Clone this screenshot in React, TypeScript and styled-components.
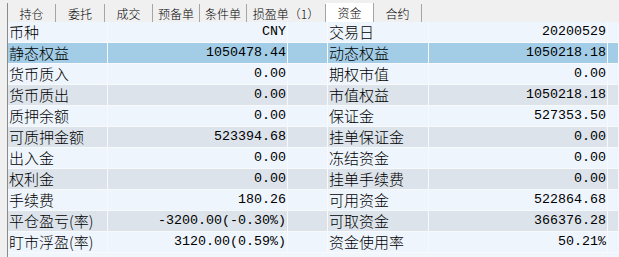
import React from "react";
import styled, { createGlobalStyle } from "styled-components";

const Global = createGlobalStyle`
  html, body {
    margin: 0;
    padding: 0;
    background: #f0f0f0;
    overflow: hidden;
  }
  body {
    width: 619px;
    height: 257px;
  }
`;

const tabs = [
  { name: "持仓", w: 48 },
  { name: "委托", w: 49 },
  { name: "成交", w: 48 },
  { name: "预备单", w: 47 },
  { name: "条件单", w: 47 },
  { name: "损盈单（1）", w: 79 },
  { name: "资金", w: 48, active: true },
  { name: "合约", w: 48 },
];

const rows = [
  ["币种", "CNY", "交易日", "20200529"],
  ["静态权益", "1050478.44", "动态权益", "1050218.18"],
  ["货币质入", "0.00", "期权市值", "0.00"],
  ["货币质出", "0.00", "市值权益", "1050218.18"],
  ["质押余额", "0.00", "保证金", "527353.50"],
  ["可质押金额", "523394.68", "挂单保证金", "0.00"],
  ["出入金", "0.00", "冻结资金", "0.00"],
  ["权利金", "0.00", "挂单手续费", "0.00"],
  ["手续费", "180.26", "可用资金", "522864.68"],
  ["平仓盈亏(率)", "-3200.00(-0.30%)", "可取资金", "366376.28"],
  ["盯市浮盈(率)", "3120.00(0.59%)", "资金使用率", "50.21%"],
];

const SELECTED = 1;

const Page = styled.div`
  padding: 3px 0 0 7px;
`;

const Panel = styled.div`
  border-left: 1px solid #8c8c8c;
  height: 254px;
  display: flex;
  flex-direction: column;
`;

const TabBar = styled.div`
  display: flex;
  height: 19px;
  align-items: flex-end;
`;

const Tab = styled.div<{ $w: number; $active?: boolean }>`
  width: ${(p) => p.$w}px;
  box-sizing: border-box;
  height: ${(p) => (p.$active ? 19 : 18)}px;
  border-right: 1px solid #a5a5a5;
  background: ${(p) => (p.$active ? "#ffffff" : "#f0f0f0")};
  font-family: "Noto Sans CJK SC", sans-serif;
  font-weight: 300;
  font-size: 12px;
  line-height: 19px;
  color: #000;
  text-align: center;
  white-space: nowrap;
`;

const Table = styled.div`
  flex: 1;
  background: #f0f6fc;
`;

const Row = styled.div<{ $kind: "light" | "dark" | "sel" }>`
  display: grid;
  grid-template-columns: 100px 180px 40px 101px 179px 1fr;
  height: 21px;
  box-sizing: border-box;
  border-bottom: 1px solid #f7f9fb;
  background: ${(p) =>
    p.$kind === "sel" ? "#a3cde6" : p.$kind === "dark" ? "#dce3ea" : "#eff5fc"};
`;

const Cell = styled.div<{ $num?: boolean }>`
  box-sizing: border-box;
  border-right: 1px solid #f7f9fb;
  height: 20px;
  line-height: 20px;
  color: #000;
  white-space: nowrap;
  overflow: hidden;
  padding: ${(p) => (p.$num ? "0 1px 0 0" : "0 0 0 1px")};
  text-align: ${(p) => (p.$num ? "right" : "left")};
  font-family: ${(p) =>
    p.$num
      ? '"Liberation Mono", monospace'
      : '"Noto Sans CJK SC", sans-serif'};
  font-weight: ${(p) => (p.$num ? 400 : 300)};
  font-size: ${(p) => (p.$num ? "13.33px" : "15px")};
`;

export default function App() {
  return (
    <Page>
      <Global />
      <Panel>
        <TabBar>
          {tabs.map((t) => (
            <Tab key={t.name} $w={t.w} $active={t.active}>
              {t.name}
            </Tab>
          ))}
        </TabBar>
        <Table>
          {rows.map((r, i) => (
            <Row
              key={r[0]}
              $kind={i === SELECTED ? "sel" : i % 2 === 1 ? "dark" : "light"}
            >
              <Cell>{r[0]}</Cell>
              <Cell $num>{r[1]}</Cell>
              <Cell />
              <Cell>{r[2]}</Cell>
              <Cell $num>{r[3]}</Cell>
              <Cell />
            </Row>
          ))}
        </Table>
      </Panel>
    </Page>
  );
}
